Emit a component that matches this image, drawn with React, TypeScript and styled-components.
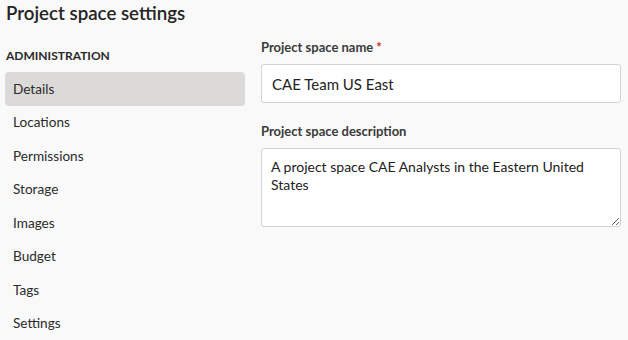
import React from "react";
import styled, { createGlobalStyle } from "styled-components";

const Global = createGlobalStyle`
  html, body { margin: 0; padding: 0; background: #f9f9f9; }
  body { font-family: "Lato", "Noto Sans", sans-serif; color: #2b2b2b; }
  * { box-sizing: border-box; }
`;

const Page = styled.div`
  width: 628px;
  height: 340px;
  overflow: hidden;
  padding: 1px 7px 0 5px;
`;

const Title = styled.h1`
  margin: 0 0 0 1px;
  font-size: 18.7px;
  font-weight: 600;
  line-height: 24px;
  color: #242424;
`;

const Body = styled.div`
  display: grid;
  grid-template-columns: 240px 360px;
  column-gap: 16px;
  margin-top: 14px;
`;

const Nav = styled.nav`
  display: flex;
  flex-direction: column;
`;

const SectionHead = styled.div`
  font-size: 12px;
  font-weight: 700;
  text-transform: uppercase;
  line-height: 16px;
  padding-left: 1px;
  margin-top: 9px;
  margin-bottom: 8px;
  color: #2a2a2a;
`;

const NavItem = styled.div<{ $active?: boolean }>`
  height: 33.5px;
  display: flex;
  align-items: center;
  padding-left: 8px;
  font-size: 13.6px;
  border-radius: 4px;
  color: #2b2b2b;
  background: ${(p) => (p.$active ? "#dcdad8" : "transparent")};
`;

const Form = styled.div`
  display: flex;
  flex-direction: column;
  padding-top: 0;
`;

const Field = styled.div`
  display: flex;
  flex-direction: column;
  margin-bottom: 20px;
`;

const Label = styled.label`
  font-size: 13px;
  font-weight: 700;
  line-height: 16px;
  margin-bottom: 9px;
  color: #3a3a3a;
`;

const Req = styled.span`
  color: #d0261a;
  margin-left: 3px;
`;

const TextInput = styled.input`
  height: 39px;
  width: 100%;
  border: 1px solid #d4d4d4;
  border-radius: 3px;
  background: #fff;
  padding: 0 10px;
  font-family: inherit;
  font-size: 15px;
  color: #222;
  outline: none;
`;

const TextArea = styled.textarea`
  height: 79px;
  width: 100%;
  border: 1px solid #d4d4d4;
  border-radius: 3px;
  background: #fff;
  padding: 9px 9px;
  font-family: inherit;
  font-size: 14px;
  line-height: 18px;
  color: #222;
  outline: none;
  resize: both;
`;

const items = ["Details", "Locations", "Permissions", "Storage", "Images", "Budget", "Tags", "Settings"];

export default function App() {
  return (
    <>
      <Global />
      <Page>
        <Title>Project space settings</Title>
        <Body>
          <Nav>
            <SectionHead>Administration</SectionHead>
            {items.map((it, i) => (
              <NavItem key={it} $active={i === 0}>
                {it}
              </NavItem>
            ))}
          </Nav>
          <Form>
            <Field>
              <Label>
                Project space name<Req>*</Req>
              </Label>
              <TextInput readOnly defaultValue="CAE Team US East" />
            </Field>
            <Field>
              <Label>Project space description</Label>
              <TextArea
                readOnly
                defaultValue="A project space CAE Analysts in the Eastern United States"
              />
            </Field>
          </Form>
        </Body>
      </Page>
    </>
  );
}
